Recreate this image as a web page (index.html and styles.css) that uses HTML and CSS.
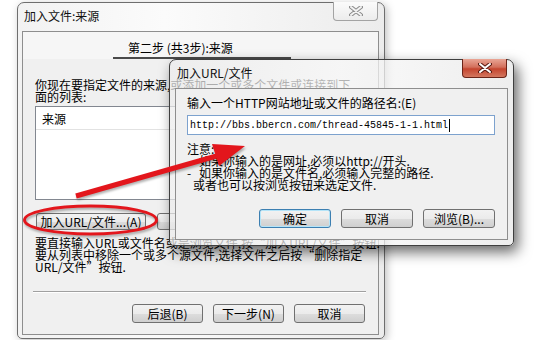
FILE: index.html
```html
<!DOCTYPE html>
<html>
<head>
  <title>加入文件:来源</title>
  <link rel="stylesheet" href="styles.css">
</head>
<body>
  <div class="desk">

    <div class="win back">
      <div class="titlebar">
        <span class="title">加入文件:来源</span>
        <span class="close">
          <svg width="14" height="10" viewBox="0 0 14 10"><path d="M2 1 L12 9 M12 1 L2 9" stroke="#8c8c8c" stroke-width="4" stroke-linecap="round"/><path d="M2 1 L12 9 M12 1 L2 9" stroke="#f3f3f3" stroke-width="2" stroke-linecap="round"/></svg>
        </span>
      </div>
      <div class="client">
        <div class="header"><span class="step">第二步 (共3步):来源</span></div>
        <p class="intro">你现在要指定文件的来源,或添加一个或多个文件或连接到下<br>面的列表:</p>
        <div class="list">
          <div class="list-head">来源</div>
        </div>
        <div class="list-btns">
          <button class="btn wide">加入URL/文件...(A)</button>
          <button class="btn wide">删除指定(R)</button>
        </div>
        <p class="help">要直接输入URL或文件名或是浏览文件,按“加入URL/文件”按钮.<br>要从列表中移除一个或多个源文件,选择文件之后按“删除指定<br>URL/文件”按钮.</p>
        <div class="sep"></div>
        <div class="nav">
          <button class="btn">后退(B)</button>
          <button class="btn">下一步(N)</button>
          <button class="btn">取消</button>
        </div>
      </div>
    </div>

    <div class="win front">
      <div class="titlebar">
        <span class="title">加入URL/文件</span>
        <span class="close active">
          <svg width="14" height="10" viewBox="0 0 14 10"><path d="M2 1 L12 9 M12 1 L2 9" stroke="#5a1a12" stroke-width="4" stroke-linecap="round"/><path d="M2 1 L12 9 M12 1 L2 9" stroke="#ffffff" stroke-width="2" stroke-linecap="round"/></svg>
        </span>
      </div>
      <div class="client">
        <div class="label">输入一个HTTP网站地址或文件的路径名:(E)</div>
        <div class="field">http://bbs.bbercn.com/thread-45845-1-1.html<span class="caret"></span></div>
        <div class="notes">
          <div>注意:</div>
          <div class="note"><span class="dash">-</span>如果你输入的是网址,必须以http://开头.</div>
          <div class="note"><span class="dash">-</span>如果你输入的是文件名,必须输入完整的路径.</div>
          <div class="note more">或者也可以按浏览按钮来选定文件.</div>
        </div>
        <div class="actions">
          <button class="btn default">确定</button>
          <button class="btn">取消</button>
          <button class="btn">浏览(B)...</button>
        </div>
      </div>
    </div>

    <svg class="marks" width="544" height="340" viewBox="0 0 544 340">
      <ellipse cx="90.5" cy="220" rx="66" ry="14" fill="none" stroke="#e3161c" stroke-width="3"/>
      <line x1="76" y1="196" x2="220" y2="155" stroke="#e3161c" stroke-width="5"/>
      <polygon points="245,146 212,144 219,166" fill="#e3161c"/>
    </svg>

  </div>
</body>
</html>
```

FILE: styles.css
```css
body {
  margin: 0;
  background-color: #ffffff;
  font-family: "Noto Sans CJK SC", sans-serif;
  font-size: 12px;
  color: #000000;
}

.desk {
  position: relative;
  width: 544px;
  height: 340px;
  overflow: hidden;
}

/* window frames */
.win {
  position: absolute;
  box-sizing: border-box;
  display: flex;
  flex-direction: column;
  border: 1px solid #6e6e6e;
  border-radius: 7px 7px 5px 5px;
}

.back {
  left: 17px;
  top: 2px;
  width: 368px;
  height: 337px;
  padding: 0 5px 3px 4px;
  background: linear-gradient(90deg, #f2f2f2, #fbfbfb 40%, #ececec);
  box-shadow: 2px 2px 8px rgba(0, 0, 0, 0.25);
}

.front {
  left: 169px;
  top: 59px;
  width: 345px;
  height: 187px;
  padding: 0 5px 5px 5px;
  border-color: #3f3f3f;
  background: linear-gradient(90deg, rgba(236, 236, 236, 0.72), rgba(248, 248, 248, 0.72) 50%, rgba(232, 232, 232, 0.75));
  box-shadow: 4px 6px 14px rgba(0, 0, 0, 0.6);
}

.titlebar {
  position: relative;
  height: 28px;
  flex: none;
}

.title {
  display: block;
  padding: 4px 0 0 2px;
  line-height: 18px;
  font-size: 12px;
  color: #111111;
}

.close {
  position: absolute;
  top: -1px;
  right: 1px;
  width: 45px;
  height: 19px;
  box-sizing: border-box;
  display: flex;
  align-items: center;
  justify-content: center;
  border: 1px solid #a3a3a3;
  border-top: none;
  border-radius: 0 0 4px 4px;
  background: linear-gradient(#fbfbfb, #ececec);
}

.close.active {
  border-color: #6b2418;
  background: linear-gradient(#e9a595, #d3705c 45%, #c4452f 55%, #d3775f);
}

.client {
  flex: 1;
  display: flex;
  flex-direction: column;
  background-color: #f0f0f0;
  border: 1px solid #8e8e8e;
}

/* back dialog contents */
.header {
  height: 27px;
  padding-left: 90px;
  background-color: #f6f6f6;
}

.step {
  display: block;
  box-sizing: border-box;
  width: 178px;
  height: 27px;
  padding: 8px 0 0 15px;
  line-height: 16px;
  border-bottom: 2px solid #4a4a4a;
}

.intro {
  margin: 20px 0 0 12px;
  line-height: 12px;
  white-space: nowrap;
}

.list {
  height: 94px;
  margin: 3px 12px 0 12px;
  box-sizing: border-box;
  background-color: #ffffff;
  border: 1px solid #828790;
}

.list-head {
  height: 23px;
  box-sizing: border-box;
  padding: 3px 0 0 6px;
  line-height: 18px;
  border-bottom: 1px solid #e2e2e2;
}

.list-btns {
  display: flex;
  gap: 11px;
  margin: 13px 0 0 13px;
}

.btn {
  box-sizing: border-box;
  width: 71px;
  height: 19px;
  padding: 0;
  border: 1px solid #707070;
  border-radius: 3px;
  background: linear-gradient(#f2f2f2, #ebebeb 50%, #dddddd 51%, #cfcfcf);
  font-family: "Noto Sans CJK SC", sans-serif;
  font-size: 12px;
  line-height: 16px;
  color: #000000;
  white-space: nowrap;
}

.list-btns .btn {
  width: 110px;
  height: 17px;
  line-height: 14px;
}

.btn.default {
  border-color: #3c7fb1;
  box-shadow: inset 0 0 0 1px #b4e4f8;
}

.help {
  margin: 7px 0 0 12px;
  line-height: 12px;
  white-space: nowrap;
}

.sep {
  height: 0;
  margin: 18px 12px 0 10px;
  border-top: 1px solid #a0a0a0;
  border-bottom: 1px solid #ffffff;
}

.nav {
  display: flex;
  justify-content: flex-end;
  gap: 10px;
  margin-top: 11px;
  padding-right: 13px;
}

/* front dialog contents */
.label {
  margin: 8px 0 0 11px;
  line-height: 12px;
}

.field {
  box-sizing: border-box;
  width: 308px;
  height: 20px;
  margin: 6px 0 0 11px;
  padding: 0 0 0 2px;
  display: flex;
  align-items: center;
  background-color: #ffffff;
  border: 1px solid #7da2ce;
  font-family: "Liberation Mono", monospace;
  font-size: 10px;
  letter-spacing: 0;
}

.caret {
  width: 1px;
  height: 13px;
  margin-left: 1px;
  background-color: #000000;
}

.notes {
  margin: 8px 0 0 11px;
  line-height: 12px;
}

.note {
  display: flex;
}

.dash {
  width: 12px;
}

.note.more {
  padding-left: 6px;
}

.actions {
  display: flex;
  justify-content: flex-end;
  gap: 10px;
  margin-top: 18px;
  padding-right: 12px;
}

.actions .btn {
  width: 72px;
}

/* red annotations drawn over the screenshot */
.marks {
  position: absolute;
  left: 0;
  top: 0;
  pointer-events: none;
  filter: drop-shadow(1px 2px 1px rgba(0, 0, 0, 0.3));
}
```
